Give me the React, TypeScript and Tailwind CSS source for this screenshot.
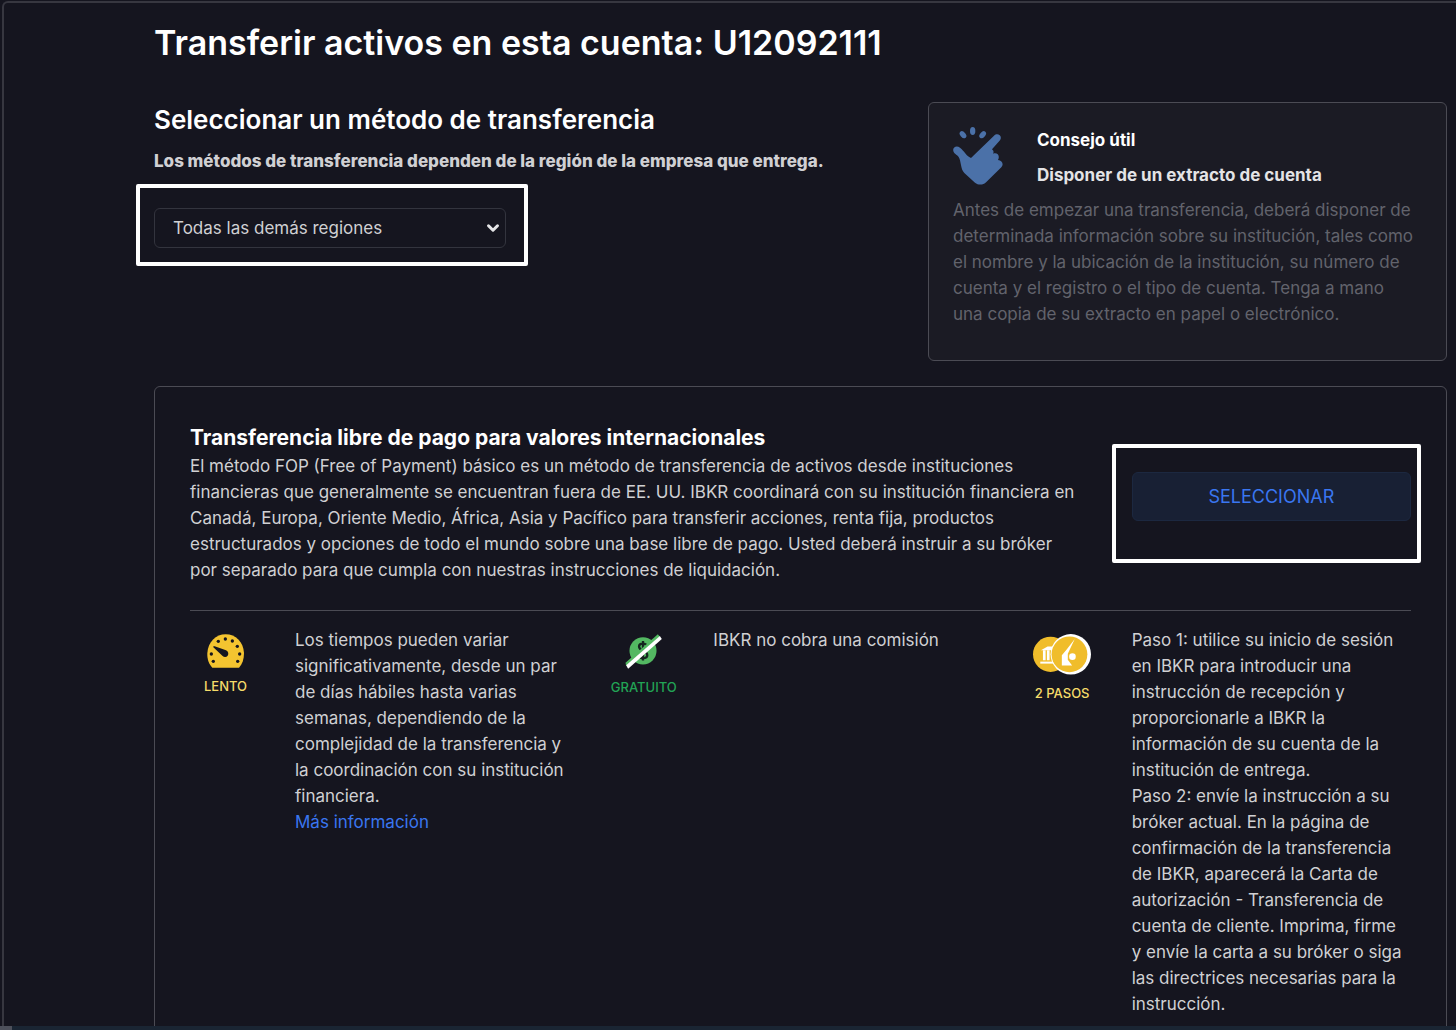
import React, { useState } from 'react';
import { ChevronDown } from 'lucide-react';

const REGIONS = ['Todas las demás regiones', 'Estados Unidos', 'Canadá', 'Europa'];

function SnapIcon() {
  return (
    <svg viewBox="66 78 150 174" className="w-[50px] h-[58px] shrink-0" fill="#4b71a8" aria-hidden="true">
      <path d="M67 150C64 137 78 132 87 140C100 150 105 164 120 171L189 104C199 94 216 104 207 118L183 145C188 149 189 154 186 158C199 153 208 164 201 177C214 179 219 190 211 199L166 243C156 253 142 253 132 245L100 216C88 204 91 181 83 168C77 160 69 159 67 150Z" />
      <ellipse cx="96" cy="101" rx="8" ry="12" transform="rotate(-42 96 101)" />
      <ellipse cx="125" cy="90" rx="8" ry="12" />
      <ellipse cx="155" cy="101" rx="8" ry="12" transform="rotate(42 155 101)" />
    </svg>
  );
}

function GaugeIcon() {
  return (
    <svg viewBox="50 100 111 102" className="w-[37px] h-[34px]" aria-hidden="true">
      <path d="M66 201C56 191 50 176 51 157C53 124 77 101 106 101C136 101 159 124 161 157C161 176 156 191 146 201Z" fill="#f4c430" />
      <g fill="#15151f">
        <circle cx="69" cy="182" r="5" />
        <circle cx="63" cy="160" r="5" />
        <circle cx="84" cy="122" r="5" />
        <circle cx="105" cy="115" r="5" />
        <circle cx="126" cy="121" r="5" />
        <circle cx="141" cy="137" r="5" />
        <circle cx="148" cy="160" r="5" />
        <circle cx="142" cy="182" r="5" />
        <path d="M69 140C68 137 70 136 73 137L107 149C114 152 116 160 112 165C108 170 101 170 96 165Z" />
      </g>
    </svg>
  );
}

function FreeIcon() {
  return (
    <svg viewBox="107 102 111 106" className="w-[37px] h-[35px]" aria-hidden="true">
      <circle cx="161" cy="153" r="41" fill="#53b862" />
      <path d="M174 141C172 133 167 131 160 131C153 131 149 135 149 140C149 147 154 150 161 153C169 156 174 160 174 166C174 172 168 175 161 175C154 175 150 172 148 167M161 123V182" fill="none" stroke="#15251f" strokeWidth="7" />
      <path d="M108 189L206 103L212 110L110 199Z" fill="#53b862" />
      <path d="M110 197L212 108L218 117L116 207Z" fill="#fff" />
    </svg>
  );
}

function StepsIcon() {
  return (
    <svg viewBox="68 101 175 123" className="w-[58px] h-[41px]" aria-hidden="true">
      <circle cx="121" cy="162" r="53" fill="#f0bd2b" />
      <g fill="#fff">
        <path d="M92 150L112 138H134V150Z" />
        <path d="M98 150H106V180H98ZM110 150H118V180H110Z" />
        <path d="M90 184H134V190H90Z" />
      </g>
      <circle cx="182" cy="162" r="61" fill="#fff" />
      <circle cx="178" cy="162" r="54" fill="#f0bd2b" />
      <path d="M194 116L169 148L155 165V196H186L173 178V160Z" fill="#fff" />
      <circle cx="187" cy="169" r="10" fill="#fff" />
    </svg>
  );
}

interface FeatureProps {
  icon: React.ReactNode;
  label: string;
  labelClass: string;
  children: React.ReactNode;
}

function Feature({ icon, label, labelClass, children }: FeatureProps) {
  return (
    <div className="flex gap-[34px]">
      <div className="w-[71px] shrink-0 pt-[7px] flex flex-col items-center gap-2">
        {icon}
        <span className={`text-[13px] leading-5 font-medium whitespace-nowrap ${labelClass}`}>{label}</span>
      </div>
      <div className="whitespace-nowrap">{children}</div>
    </div>
  );
}

export default function App() {
  const [region, setRegion] = useState(REGIONS[0]);

  return (
    <div className="h-screen flex flex-col overflow-hidden bg-[#15151f] text-[#d0d0d3] text-[17px] leading-[26px] font-[Inter,sans-serif]">
      <main className="flex-1 min-h-0 overflow-hidden mt-px ml-0.5 border-t-2 border-l-2 border-[#373740] rounded-tl-md pl-[150px] pr-[9px] pt-5">
        <h1 className="text-[34px] leading-10 font-semibold text-white">
          Transferir activos en esta cuenta: U12092111
        </h1>

        {/* Region picker and tip */}
        <div className="mt-[39px] flex justify-between">
          <div>
            <h2 className="text-[26px] leading-9 font-semibold text-white">Seleccionar un método de transferencia</h2>
            <label htmlFor="region" className="mt-[10px] block font-extrabold">
              Los métodos de transferencia dependen de la región de la empresa que entrega.
            </label>
            <div className="relative mt-[34px] w-[352px]">
              <select
                id="region"
                value={region}
                onChange={(e) => setRegion(e.target.value)}
                className="w-full h-10 appearance-none rounded-md border border-[#33343e] bg-transparent pl-[18px] pr-8"
              >
                {REGIONS.map((r) => (
                  <option key={r} value={r} className="bg-[#15151f]">{r}</option>
                ))}
              </select>
              <ChevronDown size={18} strokeWidth={4} className="absolute right-1 top-[11px] text-[#e4e4e6] pointer-events-none" />
              <div className="absolute -left-[18px] -right-[22px] -top-6 -bottom-[18px] border-4 border-white rounded-xs pointer-events-none" />
            </div>
          </div>

          <aside className="w-[519px] shrink-0 rounded-md border border-[#4b4b54] bg-[#1b1b24] px-6 pt-6 pb-[33px]">
            <div className="flex gap-[34px]">
              <SnapIcon />
              <div className="font-bold">
                <h3 className="text-white">Consejo útil</h3>
                <p className="mt-[9px] text-[#e4e4e6]">Disponer de un extracto de cuenta</p>
              </div>
            </div>
            <p className="mt-[9px] whitespace-nowrap text-[#62636c]">
              Antes de empezar una transferencia, deberá disponer de<br />
              determinada información sobre su institución, tales como<br />
              el nombre y la ubicación de la institución, su número de<br />
              cuenta y el registro o el tipo de cuenta. Tenga a mano<br />
              una copia de su extracto en papel o electrónico.
            </p>
          </aside>
        </div>

        {/* Transfer method */}
        <section className="mt-[25px] h-screen rounded-md border border-[#4b4b54] px-[35px] pt-9">
          <div className="grid grid-cols-3 gap-x-[34px]">
            <div className="col-span-2 whitespace-nowrap">
              <h3 className="text-[21px] leading-[30px] font-bold text-white">
                Transferencia libre de pago para valores internacionales
              </h3>
              <p>
                El método FOP (Free of Payment) básico es un método de transferencia de activos desde instituciones<br />
                financieras que generalmente se encuentran fuera de EE. UU. IBKR coordinará con su institución financiera en<br />
                Canadá, Europa, Oriente Medio, África, Asia y Pacífico para transferir acciones, renta fija, productos<br />
                estructurados y opciones de todo el mundo sobre una base libre de pago. Usted deberá instruir a su bróker<br />
                por separado para que cumpla con nuestras instrucciones de liquidación.
              </p>
            </div>
            <div className="pl-[105px] pt-[49px]">
              <div className="relative">
                <button
                  type="button"
                  className="w-full h-[49px] rounded-md border border-[#1c2840] bg-[#182034] text-[#3a76f0] text-lg"
                >
                  SELECCIONAR
                </button>
                <div className="absolute -left-5 -right-[10px] -top-7 -bottom-[42px] border-4 border-white rounded-xs pointer-events-none" />
              </div>
            </div>
          </div>

          <hr className="mt-[27px] border-[#4b4b54]" />

          <div className="mt-4 grid grid-cols-3 gap-x-[34px]">
            <Feature icon={<GaugeIcon />} label="LENTO" labelClass="text-[#f5dc6a]">
              <p>
                Los tiempos pueden variar<br />
                significativamente, desde un par<br />
                de días hábiles hasta varias<br />
                semanas, dependiendo de la<br />
                complejidad de la transferencia y<br />
                la coordinación con su institución<br />
                financiera.
              </p>
              <a href="#informacion" className="text-[#3a76f0]">Más información</a>
            </Feature>

            <Feature icon={<FreeIcon />} label="GRATUITO" labelClass="text-[#22a355]">
              <p>IBKR no cobra una comisión</p>
            </Feature>

            <Feature icon={<StepsIcon />} label="2 PASOS" labelClass="text-[#f5dc6a]">
              <p>
                Paso 1: utilice su inicio de sesión<br />
                en IBKR para introducir una<br />
                instrucción de recepción y<br />
                proporcionarle a IBKR la<br />
                información de su cuenta de la<br />
                institución de entrega.
              </p>
              <p>
                Paso 2: envíe la instrucción a su<br />
                bróker actual. En la página de<br />
                confirmación de la transferencia<br />
                de IBKR, aparecerá la Carta de<br />
                autorización - Transferencia de<br />
                cuenta de cliente. Imprima, firme<br />
                y envíe la carta a su bróker o siga<br />
                las directrices necesarias para la<br />
                instrucción.
              </p>
            </Feature>
          </div>
        </section>
      </main>

      {/* Horizontal scroll track */}
      <div className="h-1 shrink-0 bg-[#1a2533]">
        <div className="h-full w-3 bg-[#4d505b]" />
      </div>
    </div>
  );
}
